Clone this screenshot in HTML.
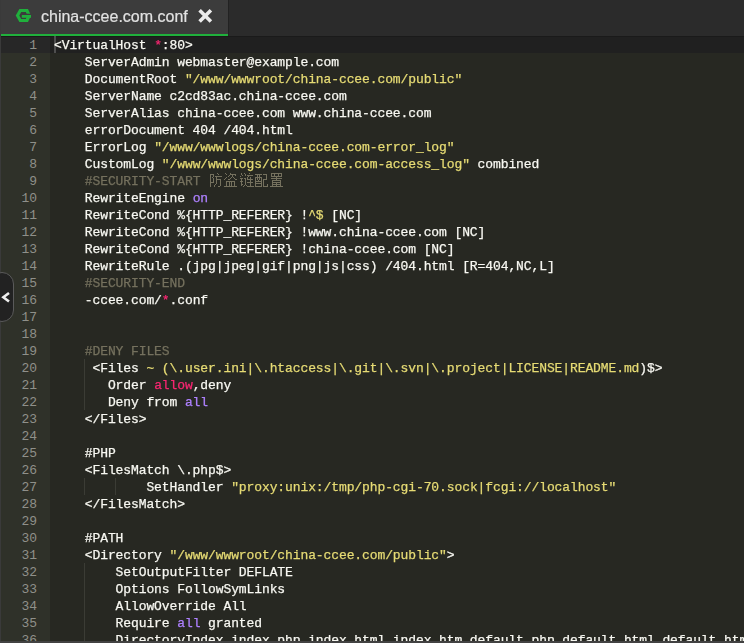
<!DOCTYPE html>
<html><head><meta charset="utf-8">
<style>
html,body{margin:0;padding:0;width:744px;height:643px;overflow:hidden;background:#272822;}
#root{position:absolute;left:0;top:0;width:744px;height:643px;overflow:hidden;background:#272822;}
#tabbar{position:absolute;left:0;top:0;width:744px;height:36px;background:#2b2b2b;}
#tab{position:absolute;left:1px;top:0;width:227px;height:34px;background:#3c3c3c;border-bottom:2px solid #20b03c;}
#tabsep{position:absolute;left:228px;top:0;width:1px;height:36px;background:#222;}
#title{position:absolute;left:41px;top:7px;-webkit-text-stroke:0.2px currentColor;will-change:transform;font-family:"Liberation Sans",sans-serif;font-size:16px;line-height:20px;color:#e2e2e2;white-space:pre;}
#gicon{position:absolute;left:15px;top:8px;}
#xicon{position:absolute;left:198px;top:8px;}
#gutter{position:absolute;left:1px;top:36px;width:49px;height:605px;background:#2f3129;}
#activeg{position:absolute;left:1px;top:36px;width:49px;height:17px;background:#272727;}
#activel{position:absolute;left:50px;top:36px;width:694px;height:17px;background:#202020;}
#leftborder{position:absolute;left:0;top:0;width:1px;height:643px;background:#3a3a3a;}
#bottombar{position:absolute;left:0;top:641px;width:744px;height:2px;background:#424242;}
.gn{position:absolute;left:1px;width:36px;height:17px;padding-top:1px;text-align:right;font-family:"Liberation Mono",monospace;font-size:13px;line-height:17px;color:#8f908a;letter-spacing:-0.1px;}
.ln{position:absolute;left:54px;height:17px;padding-top:1px;-webkit-text-stroke:0.25px currentColor;will-change:transform;white-space:pre;font-family:"Liberation Mono",monospace;font-size:13px;line-height:17px;color:#f8f8f2;letter-spacing:-0.1px;}
.ln .k{color:#f92672}
.ln .s{color:#e6db74}
.ln .c{color:#75715e}
.ln .n{color:#ae81ff}
.ig{position:absolute;width:1px;height:17px;background:#3b3c35;}
#cursor{position:absolute;left:54px;top:36px;width:2px;height:17px;background:#4e4e4e;}
#collapse{position:absolute;left:-10px;top:272px;width:22px;height:48px;border:1px solid #5a5a5a;border-radius:12px;background:#222;}
#chev{position:absolute;left:0px;top:288px;}
</style></head><body><div id="root">
<div id="tabbar"></div>
<div id="tab"></div>
<div id="tabsep"></div>
<svg id="gicon" width="17" height="15" viewBox="15 8 17 15"><polygon points="15.7,15.5 19.4,8.9 28,8.9 31,15.5 28,22.1 19.4,22.1" fill="#20b03c"/><polygon points="19.3,15.5 21.25,12 25.8,12 27.4,15.5 25.8,19 21.25,19" fill="#3c3c3c"/><rect x="25" y="13.7" width="7" height="1.3" fill="#3c3c3c"/><rect x="21.8" y="15" width="9.2" height="2.8" fill="#20b03c"/></svg>
<div id="title">china-ccee.com.conf</div>
<svg id="xicon" width="16" height="16" viewBox="0 0 16 16"><path d="M1.6 2.3 L12.9 13.6 M12.9 2.3 L1.6 13.6" stroke="#ececec" stroke-width="3.6"/></svg>
<div id="gutter"></div>
<div id="activeg"></div>
<div id="activel"></div>
<div class="ig" style="top:359px;left:84px"></div>
<div class="ig" style="top:376px;left:84px"></div>
<div class="ig" style="top:393px;left:84px"></div>
<div class="ig" style="top:478px;left:84px"></div>
<div class="ig" style="top:478px;left:115px"></div>
<div class="ig" style="top:563px;left:84px"></div>
<div class="ig" style="top:580px;left:84px"></div>
<div class="ig" style="top:597px;left:84px"></div>
<div class="ig" style="top:614px;left:84px"></div>
<div class="ig" style="top:631px;left:84px"></div>
<div id="shadow" style="position:absolute;left:0;top:36px;width:744px;height:1px;background:#1a1a1a;"></div>
<div id="cursor"></div>
<div class="gn" style="top:36px">1</div>
<div class="gn" style="top:53px">2</div>
<div class="gn" style="top:70px">3</div>
<div class="gn" style="top:87px">4</div>
<div class="gn" style="top:104px">5</div>
<div class="gn" style="top:121px">6</div>
<div class="gn" style="top:138px">7</div>
<div class="gn" style="top:155px">8</div>
<div class="gn" style="top:172px">9</div>
<div class="gn" style="top:189px">10</div>
<div class="gn" style="top:206px">11</div>
<div class="gn" style="top:223px">12</div>
<div class="gn" style="top:240px">13</div>
<div class="gn" style="top:257px">14</div>
<div class="gn" style="top:274px">15</div>
<div class="gn" style="top:291px">16</div>
<div class="gn" style="top:308px">17</div>
<div class="gn" style="top:325px">18</div>
<div class="gn" style="top:342px">19</div>
<div class="gn" style="top:359px">20</div>
<div class="gn" style="top:376px">21</div>
<div class="gn" style="top:393px">22</div>
<div class="gn" style="top:410px">23</div>
<div class="gn" style="top:427px">24</div>
<div class="gn" style="top:444px">25</div>
<div class="gn" style="top:461px">26</div>
<div class="gn" style="top:478px">27</div>
<div class="gn" style="top:495px">28</div>
<div class="gn" style="top:512px">29</div>
<div class="gn" style="top:529px">30</div>
<div class="gn" style="top:546px">31</div>
<div class="gn" style="top:563px">32</div>
<div class="gn" style="top:580px">33</div>
<div class="gn" style="top:597px">34</div>
<div class="gn" style="top:614px">35</div>
<div class="gn" style="top:631px">36</div>
<div class="ln" style="top:36px"><span class="t">&lt;VirtualHost </span><span class="k">*</span><span class="t">:80&gt;</span></div>
<div class="ln" style="top:53px"><span class="t">    ServerAdmin webmaster@example.com</span></div>
<div class="ln" style="top:70px"><span class="t">    DocumentRoot </span><span class="s">"/www/wwwroot/china-ccee.com/public"</span></div>
<div class="ln" style="top:87px"><span class="t">    ServerName c2cd83ac.china-ccee.com</span></div>
<div class="ln" style="top:104px"><span class="t">    ServerAlias china-ccee.com www.china-ccee.com</span></div>
<div class="ln" style="top:121px"><span class="t">    errorDocument 404 /404.html</span></div>
<div class="ln" style="top:138px"><span class="t">    ErrorLog </span><span class="s">"/www/wwwlogs/china-ccee.com-error_log"</span></div>
<div class="ln" style="top:155px"><span class="t">    CustomLog </span><span class="s">"/www/wwwlogs/china-ccee.com-access_log"</span><span class="t"> combined</span></div>
<div class="ln" style="top:172px"><span class="t">    </span><span class="c">#SECURITY-START </span></div>
<div class="ln" style="top:189px"><span class="t">    RewriteEngine </span><span class="n">on</span></div>
<div class="ln" style="top:206px"><span class="t">    RewriteCond %{HTTP_REFERER} !</span><span class="s">^$</span><span class="t"> [NC]</span></div>
<div class="ln" style="top:223px"><span class="t">    RewriteCond %{HTTP_REFERER} !www.china-ccee.com [NC]</span></div>
<div class="ln" style="top:240px"><span class="t">    RewriteCond %{HTTP_REFERER} !china-ccee.com [NC]</span></div>
<div class="ln" style="top:257px"><span class="t">    RewriteRule .(jpg|jpeg|gif|png|js|css) /404.html [R=404,NC,L]</span></div>
<div class="ln" style="top:274px"><span class="t">    </span><span class="c">#SECURITY-END</span></div>
<div class="ln" style="top:291px"><span class="t">    -ccee.com/</span><span class="k">*</span><span class="t">.conf</span></div>
<div class="ln" style="top:308px"></div>
<div class="ln" style="top:325px"></div>
<div class="ln" style="top:342px"><span class="t">    </span><span class="c">#DENY FILES</span></div>
<div class="ln" style="top:359px"><span class="t">     &lt;Files </span><span class="s">~ (\.user.ini|\.htaccess|\.git|\.svn|\.project|LICENSE|README.md</span><span class="t">)$&gt;</span></div>
<div class="ln" style="top:376px"><span class="t">       Order </span><span class="k">allow</span><span class="t">,deny</span></div>
<div class="ln" style="top:393px"><span class="t">       Deny from </span><span class="n">all</span></div>
<div class="ln" style="top:410px"><span class="t">    &lt;/Files&gt;</span></div>
<div class="ln" style="top:427px"></div>
<div class="ln" style="top:444px"><span class="t">    #PHP</span></div>
<div class="ln" style="top:461px"><span class="t">    &lt;FilesMatch \.php$&gt;</span></div>
<div class="ln" style="top:478px"><span class="t">            SetHandler </span><span class="s">"proxy:unix:/tmp/php-cgi-70.sock|fcgi://localhost"</span></div>
<div class="ln" style="top:495px"><span class="t">    &lt;/FilesMatch&gt;</span></div>
<div class="ln" style="top:512px"></div>
<div class="ln" style="top:529px"><span class="t">    #PATH</span></div>
<div class="ln" style="top:546px"><span class="t">    &lt;Directory </span><span class="s">"/www/wwwroot/china-ccee.com/public"</span><span class="t">&gt;</span></div>
<div class="ln" style="top:563px"><span class="t">        SetOutputFilter DEFLATE</span></div>
<div class="ln" style="top:580px"><span class="t">        Options FollowSymLinks</span></div>
<div class="ln" style="top:597px"><span class="t">        AllowOverride All</span></div>
<div class="ln" style="top:614px"><span class="t">        Require </span><span class="n">all</span><span class="t"> granted</span></div>
<div class="ln" style="top:631px"><span class="t">        DirectoryIndex index.php index.html index.htm default.php default.html default.htm</span></div>
<svg id="cjk" style="position:absolute;left:200px;top:168px" width="90" height="24" viewBox="200 168 90 24" shape-rendering="crispEdges"><g fill="#75715e"><rect x="210" y="174" width="1" height="13"/><rect x="210" y="174" width="4" height="1"/><rect x="213" y="175" width="1" height="2"/><rect x="212" y="177" width="1" height="1"/><rect x="213" y="178" width="1" height="4"/><rect x="211" y="182" width="3" height="1"/><rect x="217" y="173" width="1" height="1"/><rect x="218" y="174" width="1" height="1"/><rect x="215" y="176" width="7" height="1"/><rect x="216" y="177" width="1" height="7"/><rect x="215" y="184" width="1" height="1"/><rect x="214" y="185" width="1" height="1"/><rect x="214" y="186" width="1" height="1"/><rect x="216" y="179" width="5" height="1"/><rect x="220" y="179" width="1" height="7"/><rect x="218" y="186" width="2" height="1"/><rect x="225" y="173" width="1" height="1"/><rect x="226" y="174" width="1" height="1"/><rect x="226" y="177" width="1" height="1"/><rect x="225" y="178" width="1" height="1"/><rect x="224" y="179" width="1" height="1"/><rect x="230" y="173" width="1" height="1"/><rect x="230" y="174" width="1" height="1"/><rect x="231" y="174" width="5" height="1"/><rect x="235" y="175" width="1" height="1"/><rect x="229" y="175" width="1" height="1"/><rect x="228" y="176" width="1" height="1"/><rect x="232" y="175" width="1" height="2"/><rect x="231" y="177" width="1" height="1"/><rect x="230" y="178" width="1" height="1"/><rect x="228" y="179" width="2" height="1"/><rect x="233" y="177" width="1" height="1"/><rect x="234" y="178" width="1" height="1"/><rect x="235" y="179" width="2" height="1"/><rect x="226" y="181" width="9" height="1"/><rect x="226" y="181" width="1" height="5"/><rect x="229" y="181" width="1" height="5"/><rect x="231" y="181" width="1" height="5"/><rect x="234" y="181" width="1" height="5"/><rect x="224" y="186" width="13" height="1"/><rect x="241" y="173" width="1" height="2"/><rect x="240" y="176" width="1" height="1"/><rect x="242" y="175" width="1" height="1"/><rect x="240" y="178" width="3" height="1"/><rect x="241" y="178" width="1" height="8"/><rect x="240" y="181" width="3" height="1"/><rect x="242" y="184" width="1" height="1"/><rect x="244" y="173" width="1" height="1"/><rect x="245" y="174" width="1" height="1"/><rect x="245" y="175" width="1" height="1"/><rect x="244" y="178" width="2" height="1"/><rect x="245" y="178" width="1" height="7"/><rect x="244" y="185" width="1" height="1"/><rect x="243" y="186" width="1" height="1"/><rect x="246" y="185" width="1" height="1"/><rect x="247" y="186" width="7" height="1"/><rect x="249" y="173" width="1" height="1"/><rect x="247" y="175" width="6" height="1"/><rect x="248" y="176" width="1" height="1"/><rect x="247" y="177" width="1" height="3"/><rect x="247" y="179" width="6" height="1"/><rect x="250" y="177" width="1" height="9"/><rect x="247" y="182" width="6" height="1"/><rect x="255" y="174" width="7" height="1"/><rect x="257" y="175" width="1" height="5"/><rect x="259" y="175" width="1" height="5"/><rect x="255" y="177" width="1" height="10"/><rect x="261" y="177" width="1" height="10"/><rect x="255" y="177" width="7" height="1"/><rect x="256" y="181" width="5" height="1"/><rect x="258" y="180" width="1" height="1"/><rect x="256" y="183" width="5" height="1"/><rect x="255" y="186" width="7" height="1"/><rect x="263" y="174" width="4" height="1"/><rect x="266" y="174" width="1" height="6"/><rect x="263" y="179" width="4" height="1"/><rect x="263" y="179" width="1" height="8"/><rect x="264" y="186" width="4" height="1"/><rect x="267" y="184" width="1" height="3"/><rect x="271" y="173" width="11" height="1"/><rect x="271" y="176" width="11" height="1"/><rect x="271" y="173" width="1" height="4"/><rect x="281" y="173" width="1" height="4"/><rect x="274" y="173" width="1" height="4"/><rect x="278" y="173" width="1" height="4"/><rect x="276" y="177" width="1" height="3"/><rect x="271" y="178" width="11" height="1"/><rect x="272" y="180" width="9" height="1"/><rect x="272" y="180" width="1" height="6"/><rect x="280" y="180" width="1" height="6"/><rect x="273" y="182" width="7" height="1"/><rect x="273" y="184" width="7" height="1"/><rect x="276" y="182" width="1" height="4"/><rect x="270" y="186" width="13" height="1"/></g></svg>
<div id="leftborder"></div>
<div id="bottombar"></div>
<div id="collapse"></div>
<svg id="chev" width="12" height="18" viewBox="0 288 12 18"><polygon points="1.2,297.2 8.2,291.9 9.8,294 5.4,297.2 9.8,300.4 8.2,302.5" fill="#eee"/></svg>
</div></body></html>
